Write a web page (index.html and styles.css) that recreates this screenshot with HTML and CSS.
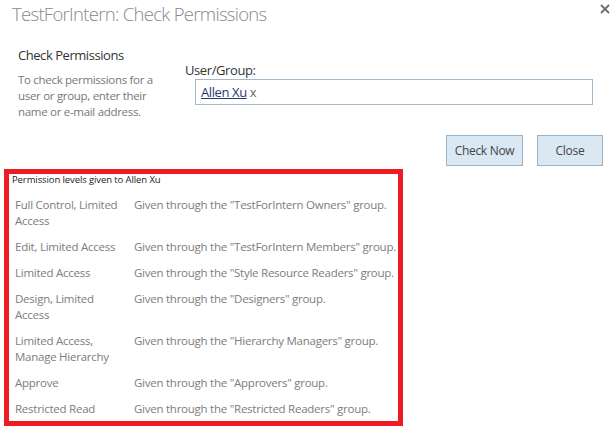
FILE: index.html
```html
<!doctype html>
<html>
<head>
    <meta charset="utf-8">
    <title>Check Permissions</title>
    <link rel="stylesheet" href="styles.css">
</head>
<body>
    <div class="dialog">
        <header class="title_bar">
            <h1 class="title">TestForIntern: Check Permissions</h1>
            <a class="close_x" href="#" title="Close">
                <svg width="10" height="10" viewBox="0 0 10 10">
                    <path d="M1 1 L9 9 M9 1 L1 9" stroke="#6d6d6d" stroke-width="1.8" fill="none"/>
                </svg>
            </a>
        </header>

        <section class="form_row">
            <div class="form_info">
                <h2>Check Permissions</h2>
                <p>To check permissions for a user or group, enter their name or e-mail address.</p>
            </div>
            <div class="form_field">
                <label>User/Group:</label>
                <div class="people_box">
                    <a href="#" class="person">Allen Xu</a> <span class="remove">x</span>
                </div>
            </div>
        </section>

        <div class="actions">
            <button class="btn">Check Now</button>
            <button class="btn btn_close">Close</button>
        </div>

        <section class="results">
            <div class="results_head">Permission levels given to Allen Xu</div>
            <div class="perm_grid">
                <div class="level">Full Control, Limited Access</div>
                <div class="source">Given through the "TestForIntern Owners" group.</div>

                <div class="level">Edit, Limited Access</div>
                <div class="source">Given through the "TestForIntern Members" group.</div>

                <div class="level">Limited Access</div>
                <div class="source">Given through the "Style Resource Readers" group.</div>

                <div class="level">Design, Limited Access</div>
                <div class="source">Given through the "Designers" group.</div>

                <div class="level">Limited Access, Manage Hierarchy</div>
                <div class="source">Given through the "Hierarchy Managers" group.</div>

                <div class="level">Approve</div>
                <div class="source">Given through the "Approvers" group.</div>

                <div class="level">Restricted Read</div>
                <div class="source">Given through the "Restricted Readers" group.</div>
            </div>
        </section>
    </div>
</body>
</html>
```

FILE: styles.css
```css
body{
    margin: 0;
    background: #fff;
    font-family: "Open Sans", "Noto Sans", sans-serif;
    color: #444;
}
.dialog{
    display: flex;
    flex-direction: column;
    width: 615px;
}

/* title */
.title_bar{
    display: flex;
    justify-content: space-between;
    align-items: flex-start;
    height: 46px;
}
.title{
    margin: 0;
    padding: 1px 0 0 12px;
    font-size: 18.5px;
    font-weight: 300;
    letter-spacing: -0.7px;
    color: #858a90;
    line-height: 26px;
}
.close_x{
    display: block;
    padding: 4px 5px 0 0;
    line-height: 0;
}

/* form */
.form_row{
    display: flex;
}
.form_info{
    width: 185px;
    padding-left: 18px;
    box-sizing: border-box;
}
.form_info h2{
    margin: 0;
    font-size: 13px;
    font-weight: normal;
    letter-spacing: -0.45px;
    color: #333;
    line-height: 18px;
}
.form_info p{
    margin: 8px 0 0 0;
    font-size: 11.5px;
    letter-spacing: -0.3px;
    color: #777;
    line-height: 16px;
    width: 145px;
}
.form_field{
    padding-top: 15px;
}
.form_field label{
    display: block;
    font-size: 13px;
    letter-spacing: -0.4px;
    color: #333;
    line-height: 18px;
}
.people_box{
    margin: 0 0 0 10px;
    width: 398px;
    height: 26px;
    box-sizing: border-box;
    border: 1px solid #a6b9cb;
    padding-left: 5px;
    font-size: 13px;
    letter-spacing: -0.4px;
    line-height: 24px;
    color: #666;
}
.people_box .person{
    color: #1f3a6e;
}

/* buttons */
.actions{
    display: flex;
    justify-content: flex-end;
    gap: 14px;
    padding: 15px 12px 0 0;
}
.btn{
    height: 31px;
    width: 77px;
    padding: 0;
    background: #dae8f3;
    border: 1px solid #98b6cb;
    font-family: "Open Sans", "Noto Sans", sans-serif;
    font-size: 12px;
    letter-spacing: -0.3px;
    color: #444;
}
.btn_close{
    width: 66px;
}

/* results box */
.results{
    margin: 3px 0 0 4px;
    width: 399px;
    height: 257px;
    box-sizing: border-box;
    border: 5px solid #ed1c24;
}
.results_head{
    font-size: 9.5px;
    letter-spacing: -0.1px;
    color: #222;
    padding: 0 0 0 3px;
    line-height: 12px;
}
.perm_grid{
    display: grid;
    grid-template-columns: 125px auto;
    padding-top: 6px;
}
.perm_grid div{
    font-size: 11.5px;
    letter-spacing: -0.25px;
    line-height: 16px;
    color: #7a7d82;
    padding: 5px 0;
}
.perm_grid .level{
    padding: 5px 12px 5px 6px;
}
```
